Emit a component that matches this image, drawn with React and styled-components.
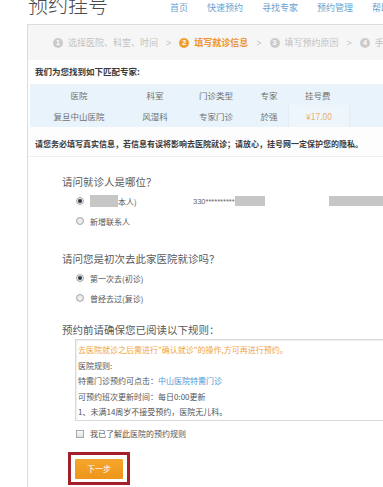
import React from 'react'
import styled, { createGlobalStyle } from 'styled-components'

const GlobalStyle = createGlobalStyle`
  html, body {
    margin: 0;
    padding: 0;
    background: #ffffff;
    overflow: hidden;
  }
  body {
    font-family: "Noto Sans CJK SC", "Noto Sans", sans-serif;
    color: #555;
  }
`

const Page = styled.div`
  width: 383px;
  height: 487px;
  overflow: hidden;
`

const Header = styled.div`
  height: 24px;
  display: flex;
  align-items: flex-start;
  padding-left: 28px;
`

const Title = styled.h1`
  margin: -5px 0 0 0;
  font-size: 20px;
  line-height: 20px;
  font-weight: 300;
  color: #4a4a4a;
  white-space: nowrap;
`

const Nav = styled.div`
  display: flex;
  gap: 19px;
  margin-left: 62px;
`

const NavItem = styled.a`
  font-size: 9px;
  line-height: 16px;
  color: #6a9fd2;
  white-space: nowrap;
  cursor: pointer;
`

const Panel = styled.div`
  margin-left: 27px;
  width: 470px;
  height: 470px;
  border-left: 1px solid #dcdcdc;
  border-top: 1px solid #dcdcdc;
`

const StepBar = styled.div`
  height: 35px;
  background: #f6f6f6;
  display: flex;
  align-items: center;
  padding-left: 25px;
  gap: 8px;
`

const Step = styled.div`
  display: flex;
  align-items: center;
  gap: 5px;
  font-size: 9px;
  white-space: nowrap;
  color: ${p => (p.$active ? '#ef9428' : '#c2c2c2')};
  font-weight: ${p => (p.$active ? 'bold' : 'normal')};
`

const StepNum = styled.span`
  width: 10px;
  height: 10px;
  border-radius: 50%;
  background: ${p => (p.$active ? '#f0a02e' : '#cbcbcb')};
  color: #fff;
  font-size: 7px;
  line-height: 10px;
  text-align: center;
  font-weight: bold;
  font-family: "Liberation Sans", sans-serif;
`

const Arrow = styled.span`
  font-size: 9px;
  color: #c4c4c4;
  font-family: "Liberation Sans", sans-serif;
`

const MatchTitle = styled.div`
  height: 22px;
  line-height: 22px;
  padding-left: 7px;
  font-size: 8.5px;
  font-weight: bold;
  color: #3a3a3a;
`

const Table = styled.div`
  margin: 2px 0 0 2px;
  background: #e8f3fb;
`

const Row = styled.div`
  display: grid;
  grid-template-columns: 98px 54px 68px 38px 62px 1fr;
  height: ${p => p.$h}px;
  align-items: stretch;
`

const Cell = styled.div`
  display: flex;
  align-items: center;
  justify-content: ${p => (p.$left ? 'flex-start' : 'center')};
  padding-left: ${p => (p.$left ? '17px' : '0')};
  font-size: 8.5px;
  color: ${p => p.$color || '#707070'};
  white-space: nowrap;
  background: ${p => (p.$light ? '#eef6fc' : 'transparent')};
  border-left: ${p => (p.$light ? '1px solid #e0ecf5' : 'none')};
  border-right: ${p => (p.$light ? '1px solid #e0ecf5' : 'none')};
`

const Notice = styled.div`
  height: 25px;
  padding: 4px 0 0 7px;
  display: flex;
  align-items: center;
  font-size: 8px;
  font-weight: bold;
  color: #3a3a3a;
  white-space: nowrap;
  border-bottom: 1px solid #efefef;
  background: #fdfdfd;
`

const Form = styled.div`
  padding-left: 34px;
`

const Question = styled.div`
  margin-top: ${p => p.$top}px;
  height: 18px;
  line-height: 18px;
  font-size: 10.5px;
  color: #5a5a5a;
  white-space: nowrap;
`

const Option = styled.div`
  height: 20px;
  display: flex;
  align-items: center;
  padding-left: 14px;
  font-size: 8px;
  color: #555;
  white-space: nowrap;
`

const Radio = styled.span`
  width: 8px;
  height: 8px;
  box-sizing: border-box;
  border-radius: 50%;
  border: 1px solid #a9a9a9;
  background: radial-gradient(circle, #f4f4f4 0%, #dcdcdc 100%);
  margin-right: 6px;
  display: flex;
  align-items: center;
  justify-content: center;
  flex-shrink: 0;
  &::after {
    content: '';
    width: 4px;
    height: 4px;
    border-radius: 50%;
    background: ${p => (p.$checked ? '#2b3a4a' : 'transparent')};
  }
`

const Redacted = styled.span`
  display: inline-block;
  width: ${p => p.$w}px;
  height: ${p => p.$h || 12}px;
  background: #c6c6c6;
  margin-left: ${p => p.$ml || 0}px;
`

const Person = styled.span`
  width: 103px;
  display: flex;
  align-items: center;
`

const IdNo = styled.span`
  display: flex;
  align-items: center;
  font-family: "Liberation Sans", sans-serif;
  font-size: 7.5px;
  color: #666;
`

const RulesBox = styled.div`
  margin-left: 13px;
  width: 360px;
  border: 1px solid #d8d8d8;
  box-shadow: inset 1px 1px 2px #eeeeee;
  padding: 2px 0 0 2px;
  font-size: 8px;
  line-height: 15.5px;
  color: #555;
  white-space: nowrap;
`

const RuleLine = styled.div`
  color: ${p => p.$color || '#555'};
`

const Link = styled.a`
  color: #4b9ad6;
`

const CheckRow = styled.div`
  margin-top: 3px;
  height: 20px;
  display: flex;
  align-items: center;
  padding-left: 14px;
  font-size: 8px;
  color: #555;
  white-space: nowrap;
`

const CheckBox = styled.span`
  width: 8px;
  height: 8px;
  box-sizing: border-box;
  border: 1px solid #a9a9a9;
  background: linear-gradient(#fafafa, #e2e2e2);
  margin-right: 6px;
`

const Highlight = styled.div`
  margin: 8px 0 0 6px;
  display: inline-block;
  border: 3px solid #a3202a;
  padding: 4px 4px 3px 4px;
`

const NextButton = styled.button`
  width: 48px;
  height: 20px;
  border: none;
  border-radius: 1px;
  background: linear-gradient(#f5a52c, #ef951a);
  color: #fff;
  font-size: 8px;
  font-family: "Noto Sans CJK SC", sans-serif;
  padding: 0;
  display: block;
`

const steps = [
  { n: '1', label: '选择医院、科室、时间' },
  { n: '2', label: '填写就诊信息', active: true },
  { n: '3', label: '填写预约原因' },
  { n: '4', label: '手机确认' },
]

const App = () => {
  return (
    <Page>
      <GlobalStyle />
      <Header>
        <Title>预约挂号</Title>
        <Nav>
          <NavItem>首页</NavItem>
          <NavItem>快速预约</NavItem>
          <NavItem>寻找专家</NavItem>
          <NavItem>预约管理</NavItem>
          <NavItem>帮助中心</NavItem>
        </Nav>
      </Header>

      <Panel>
        <StepBar>
          {steps.map((s, i) => (
            <React.Fragment key={s.n}>
              {i > 0 && <Arrow>&gt;</Arrow>}
              <Step $active={s.active}>
                <StepNum $active={s.active}>{s.n}</StepNum>
                {s.label}
              </Step>
            </React.Fragment>
          ))}
        </StepBar>

        <MatchTitle>我们为您找到如下匹配专家:</MatchTitle>
        <Table>
          <Row $h={21}>
            <Cell>医院</Cell>
            <Cell>科室</Cell>
            <Cell>门诊类型</Cell>
            <Cell>专家</Cell>
            <Cell $left>挂号费</Cell>
            <Cell />
          </Row>
          <Row $h={22}>
            <Cell>复旦中山医院</Cell>
            <Cell>风湿科</Cell>
            <Cell>专家门诊</Cell>
            <Cell>於强</Cell>
            <Cell $left $light $color="#e9b068">¥17.00</Cell>
            <Cell />
          </Row>
        </Table>

        <Notice>请您务必填写真实信息，若信息有误将影响去医院就诊；请放心，挂号网一定保护您的隐私。</Notice>

        <Form>
          <Question $top={16}>请问就诊人是哪位？</Question>
          <Option>
            <Radio $checked />
            <Person>
              <Redacted $w={28} />
              本人)
            </Person>
            <IdNo>
              330**********
              <Redacted $w={30} $h={10} />
            </IdNo>
            <Redacted $w={60} $h={10} $ml={64} />
          </Option>
          <Option>
            <Radio />
            新增联系人
          </Option>

          <Question $top={19}>请问您是初次去此家医院就诊吗？</Question>
          <Option>
            <Radio $checked />
            第一次去(初诊)
          </Option>
          <Option>
            <Radio />
            曾经去过(复诊)
          </Option>

          <Question $top={13}>预约前请确保您已阅读以下规则：</Question>
          <RulesBox>
            <RuleLine $color="#f0a445">去医院就诊之后需进行"确认就诊"的操作,方可再进行预约。</RuleLine>
            <RuleLine>医院规则:</RuleLine>
            <RuleLine>
              特需门诊预约可点击：<Link>中山医院特需门诊</Link>
            </RuleLine>
            <RuleLine>可预约班次更新时间：每日0:00更新</RuleLine>
            <RuleLine>1、未满14周岁不接受预约，医院无儿科。</RuleLine>
          </RulesBox>

          <CheckRow>
            <CheckBox />
            我已了解此医院的预约规则
          </CheckRow>

          <Highlight>
            <NextButton>下一步</NextButton>
          </Highlight>
        </Form>
      </Panel>
    </Page>
  )
}

export default App
